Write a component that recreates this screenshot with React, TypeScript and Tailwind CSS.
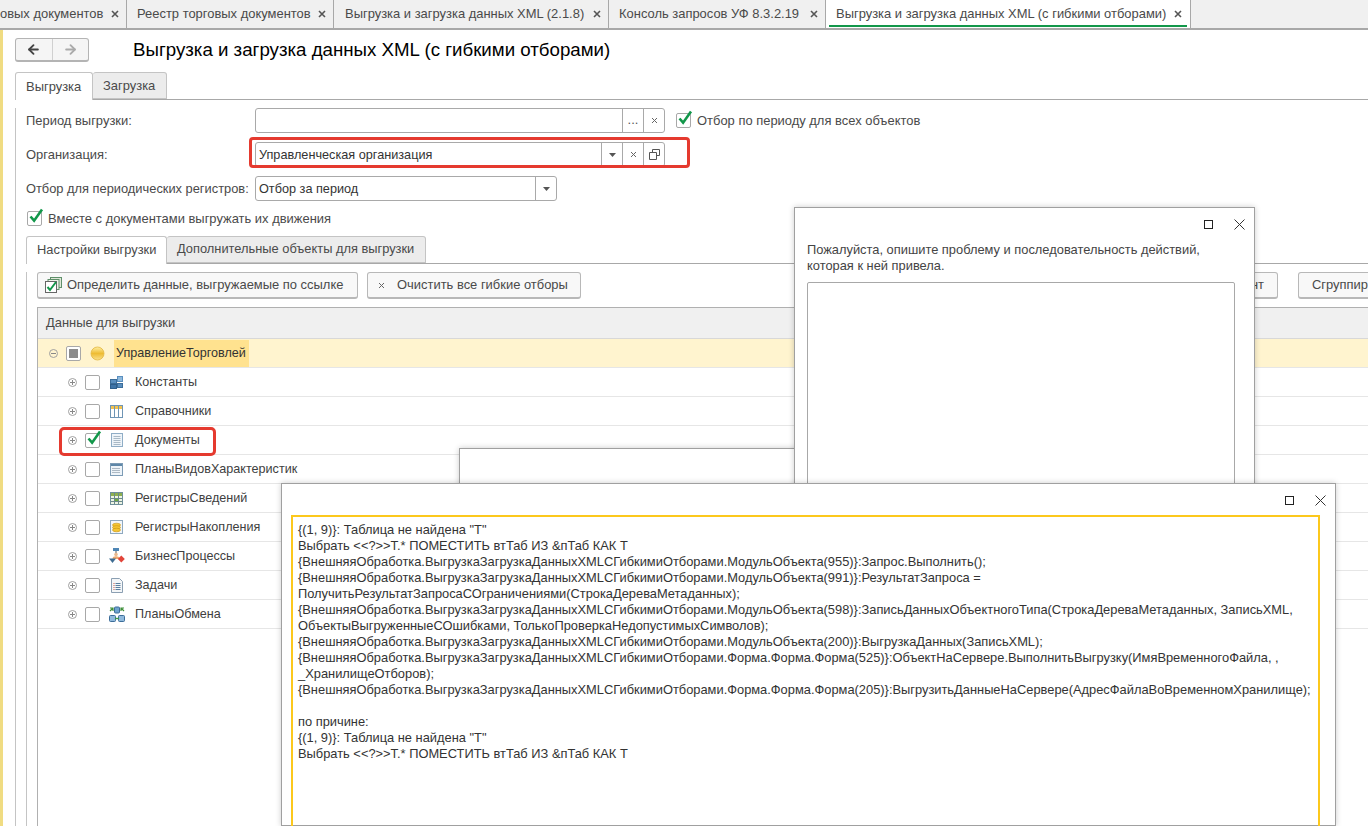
import React from "react";
import { ArrowLeft, ArrowRight } from "lucide-react";

const font = "font-['Liberation_Sans',Arial,sans-serif]";

const tabs = [
  { text: "овых документов", w: "w-[127px]", pl: "pl-0" },
  { text: "Реестр торговых документов", w: "w-[207px]", pl: "pl-[10px]" },
  { text: "Выгрузка и загрузка данных XML (2.1.8)", w: "w-[275px]", pl: "pl-[11px]" },
  { text: "Консоль запросов УФ 8.3.2.19", w: "w-[217px]", pl: "pl-[10px]" },
];

const TabClose = () => (
  <svg width="8" height="8" viewBox="0 0 8 8" className="shrink-0">
    <path d="M1 1l6 6M7 1L1 7" stroke="#555" strokeWidth="1.6" />
  </svg>
);

const SmallX = () => (
  <svg width="7" height="7" viewBox="0 0 7 7">
    <path d="M1 1l5 5M6 1L1 6" stroke="#666" strokeWidth="1" />
  </svg>
);

const Caret = () => (
  <svg width="7" height="4" viewBox="0 0 7 4">
    <path d="M0 0h7L3.5 4z" fill="#555" />
  </svg>
);

const OpenIcon = () => (
  <svg width="11" height="11" viewBox="0 0 11 11" fill="none" stroke="#555" strokeWidth="1">
    <path d="M3.5 3V.5h7v6H8" />
    <path d="M.5 3.5h7v7h-7z" />
  </svg>
);

const Check = ({ checked }: { checked?: boolean }) => (
  <span className="relative block w-[15px] h-[15px] border border-[#a8a8a8] rounded-[2px] bg-white shrink-0">
    {checked && (
      <svg width="17" height="16" viewBox="0 0 17 16" className="absolute left-0 top-[-4px]">
        <path d="M2.5 8.5l3.6 4.2L14 1.5" fill="none" stroke="#12974a" strokeWidth="2.6" />
      </svg>
    )}
  </span>
);

const Seg = ({ children }: { children?: React.ReactNode }) => (
  <span className="w-[21px] h-full border-l border-[#a9a9a9] flex items-center justify-center text-[#555]">
    {children}
  </span>
);

const Field = ({
  w,
  text,
  children,
}: {
  w: string;
  text?: string;
  children: React.ReactNode;
}) => (
  <div className={`${w} h-[25px] border border-[#a9a9a9] rounded-[3px] bg-white flex items-center`}>
    <span className="flex-1 pl-[3px] pt-px text-[12.7px] text-[#333]">{text}</span>
    {children}
  </div>
);

const Expander = ({ minus }: { minus?: boolean }) => (
  <svg width="11" height="11" viewBox="0 0 11 11" className="shrink-0">
    <circle cx="5.5" cy="5.5" r="4" fill="none" stroke="#a0a0a0" />
    <path d={minus ? "M3 5.5h5" : "M3 5.5h5M5.5 3v5"} stroke="#888" />
  </svg>
);

const ConstIcon = () => (
  <svg width="14" height="13" viewBox="0 0 14 13">
    <rect x="0.5" y="3.5" width="6" height="4" fill="#5a8fbf" stroke="#3c6d99" />
    <rect x="7.5" y="0.5" width="5" height="5" fill="#8fb9dc" stroke="#5a8fbf" />
    <rect x="0.5" y="8.5" width="6" height="4" fill="#3f75a8" stroke="#2f5f8c" />
    <rect x="7.5" y="7.5" width="5" height="4" fill="#5a8fbf" stroke="#3c6d99" />
  </svg>
);

const CatalogIcon = () => (
  <svg width="14" height="13" viewBox="0 0 14 13">
    <rect x="0.5" y="0.5" width="12" height="12" fill="#fff" stroke="#6f95b5" />
    <path d="M1 1h11v3H1z" fill="#f2c24f" />
    <path d="M4.5 1v11M8.5 1v11" stroke="#6f95b5" />
  </svg>
);

const DocIcon = () => (
  <svg width="14" height="14" viewBox="0 0 14 14">
    <rect x="1.5" y="0.5" width="11" height="13" fill="#eef4f9" stroke="#8fadc6" />
    <path d="M3.5 3.5h7M3.5 5.5h7M3.5 7.5h7M3.5 9.5h7M3.5 11.5h7" stroke="#a9b9c6" />
  </svg>
);

const CharIcon = () => (
  <svg width="14" height="13" viewBox="0 0 14 13">
    <rect x="0.5" y="0.5" width="12" height="12" fill="#eef4f9" stroke="#7d9cb6" />
    <path d="M1 1h11v2H1z" fill="#5e87a8" />
    <path d="M2.5 5.5h8M2.5 7.5h8M2.5 9.5h8" stroke="#6d7f8e" strokeDasharray="1 1" />
  </svg>
);

const InfoRegIcon = () => (
  <svg width="14" height="13" viewBox="0 0 14 13">
    <rect x="0.5" y="0.5" width="12" height="12" fill="#edf3e4" stroke="#6f8f9a" />
    <path d="M1 1h11v3H1z" fill="#8db04e" />
    <path d="M4.5 1v11M8.5 1v11M1 6.5h11M1 9.5h11" stroke="#6d8a8a" />
    <path d="M5 7h3v2H5z" fill="#6fae3f" />
  </svg>
);

const AccumRegIcon = () => (
  <svg width="14" height="14" viewBox="0 0 14 14">
    <rect x="0.5" y="0.5" width="12" height="13" fill="#f2f6fa" stroke="#8fa9c0" />
    <ellipse cx="6.5" cy="5" rx="4" ry="1.8" fill="#f4c534" stroke="#c9930f" strokeWidth="0.6" />
    <ellipse cx="6.5" cy="7.5" rx="4" ry="1.8" fill="#f4c534" stroke="#c9930f" strokeWidth="0.6" />
    <ellipse cx="6.5" cy="10" rx="4" ry="1.8" fill="#f4c534" stroke="#c9930f" strokeWidth="0.6" />
  </svg>
);

const BizIcon = () => (
  <svg width="16" height="16" viewBox="0 0 16 16">
    <path d="M4 0h6v3H4z" fill="#4f86b5" />
    <path d="M7 3v3" stroke="#555" />
    <circle cx="7" cy="6.500" r="1.800" fill="#eab98f" />
    <path d="M3.500 11c0-2.200 1.500-2.800 3.500-2.800s3.500.6 3.500 2.800z" fill="#eda86e" />
    <path d="M0 10.500h7L3.500 15z" fill="#3e6c92" />
    <path d="M12.300 7.500l3.500 3.500-3.500 3.500L8.800 11z" fill="#e2453a" />
  </svg>
);

const TaskIcon = () => (
  <svg width="14" height="15" viewBox="0 0 14 15">
    <path d="M1.500.5h8l3 3v11h-11z" fill="#f4f6f8" stroke="#8b9fb2" />
    <path d="M3.500 5.500h1M3.500 7.500h1M3.500 9.500h1M3.500 11.500h1" stroke="#d0553f" />
    <path d="M5.500 5.500h5M5.500 7.500h5M5.500 9.500h5M5.500 11.500h5" stroke="#5a7f9f" />
  </svg>
);

const ExchangeIcon = () => (
  <svg width="16" height="16" viewBox="0 0 16 16">
    <rect x="5.500" y="1" width="5" height="6" rx="1" fill="#6ea3cf" stroke="#3c6d99" />
    <rect x="0.500" y="9.500" width="6" height="6" rx="1" fill="#8fb9dc" stroke="#3c6d99" />
    <rect x="9.500" y="9.500" width="6" height="6" rx="1" fill="#8fb9dc" stroke="#3c6d99" />
    <path d="M1 5l3-3M1 2h3v3M15 5l-3-3M15 2h-3v3" stroke="#3f8f3a" strokeWidth="1.200" fill="none" />
    <path d="M6 12.500h4" stroke="#3f9a4a" strokeWidth="1.400" />
  </svg>
);

const RootIcon = () => (
  <svg width="15" height="15" viewBox="0 0 15 15">
    <defs>
      <linearGradient id="rootBall" x1="0" y1="0" x2="0" y2="1">
        <stop offset="0" stopColor="#ffeea0" />
        <stop offset="0.5" stopColor="#eebc33" />
        <stop offset="1" stopColor="#fae08a" />
      </linearGradient>
    </defs>
    <circle cx="7.500" cy="7.500" r="6.500" fill="url(#rootBall)" stroke="#e2b640" strokeWidth="0.8" />
  </svg>
);

const rows: { name: string; icon: React.ReactNode; checked?: boolean }[] = [
  { name: "Константы", icon: <ConstIcon /> },
  { name: "Справочники", icon: <CatalogIcon /> },
  { name: "Документы", icon: <DocIcon />, checked: true },
  { name: "ПланыВидовХарактеристик", icon: <CharIcon /> },
  { name: "РегистрыСведений", icon: <InfoRegIcon /> },
  { name: "РегистрыНакопления", icon: <AccumRegIcon /> },
  { name: "БизнесПроцессы", icon: <BizIcon /> },
  { name: "Задачи", icon: <TaskIcon /> },
  { name: "ПланыОбмена", icon: <ExchangeIcon /> },
];

const errorLines = [
  '{(1, 9)}: Таблица не найдена "Т"',
  "Выбрать <<?>>Т.* ПОМЕСТИТЬ втТаб ИЗ &пТаб КАК Т",
  "{ВнешняяОбработка.ВыгрузкаЗагрузкаДанныхXMLСГибкимиОтборами.МодульОбъекта(955)}:Запрос.Выполнить();",
  "{ВнешняяОбработка.ВыгрузкаЗагрузкаДанныхXMLСГибкимиОтборами.МодульОбъекта(991)}:РезультатЗапроса =",
  "ПолучитьРезультатЗапросаСОграничениями(СтрокаДереваМетаданных);",
  "{ВнешняяОбработка.ВыгрузкаЗагрузкаДанныхXMLСГибкимиОтборами.МодульОбъекта(598)}:ЗаписьДанныхОбъектногоТипа(СтрокаДереваМетаданных, ЗаписьXML,",
  "ОбъектыВыгруженныеСОшибками, ТолькоПроверкаНедопустимыхСимволов);",
  "{ВнешняяОбработка.ВыгрузкаЗагрузкаДанныхXMLСГибкимиОтборами.МодульОбъекта(200)}:ВыгрузкаДанных(ЗаписьXML);",
  "{ВнешняяОбработка.ВыгрузкаЗагрузкаДанныхXMLСГибкимиОтборами.Форма.Форма.Форма(525)}:ОбъектНаСервере.ВыполнитьВыгрузку(ИмяВременногоФайла, ,",
  "_ХранилищеОтборов);",
  "{ВнешняяОбработка.ВыгрузкаЗагрузкаДанныхXMLСГибкимиОтборами.Форма.Форма.Форма(205)}:ВыгрузитьДанныеНаСервере(АдресФайлаВоВременномХранилище);",
  "",
  "по причине:",
  '{(1, 9)}: Таблица не найдена "Т"',
  "Выбрать <<?>>Т.* ПОМЕСТИТЬ втТаб ИЗ &пТаб КАК Т",
];

const WindowButtons = () => (
  <div className="flex items-center justify-end gap-[21px] pr-[9px]">
    <span className="block w-[9px] h-[9px] border border-[#222]" />
    <svg width="11" height="11" viewBox="0 0 11 11">
      <path d="M.5.5l10 10M10.500.5l-10 10" stroke="#333" />
    </svg>
  </div>
);

export default function App() {
  return (
    <div className={`${font} relative w-[1368px] h-[826px] overflow-hidden bg-white text-[12.95px] leading-none text-[#4a4a4a]`}>
      <div className="h-[30px] flex bg-[#f0f0f0] border-b-2 border-[#a8a8a8]">
        {tabs.map((t) => (
          <div key={t.text} className={`${t.w} ${t.pl} h-[28px] flex items-center justify-between pr-[7px] border-r border-[#a8a8a8] shrink-0`}>
            <span className="whitespace-nowrap">{t.text}</span>
            <TabClose />
          </div>
        ))}
        <div className="relative w-[365px] h-[28px] pl-[10px] pr-[8px] flex items-center justify-between border-r border-[#a8a8a8] bg-white">
          <span className="whitespace-nowrap">Выгрузка и загрузка данных XML (с гибкими отборами)</span>
          <TabClose />
          <span className="absolute left-[3px] right-[3px] bottom-[1px] h-[2px] bg-[#12974a]" />
        </div>
      </div>

      <div className="flex h-[796px]">
        <div className="w-[3px] bg-[#f0dc82] shrink-0" />
        <div className="flex-1 pl-[12px] pt-[8px] min-w-0">
          <div className="flex items-center h-[24px]">
            <div className="w-[74px] h-[24px] flex border border-[#b4b4b4] border-b-2 rounded-[3px] bg-[#f5f5f5]">
              <span className="flex-1 flex items-center justify-center border-r border-[#d0d0d0]">
                <ArrowLeft size={15} strokeWidth={3} color="#444" />
              </span>
              <span className="flex-1 flex items-center justify-center">
                <ArrowRight size={15} strokeWidth={3} color="#aaa" />
              </span>
            </div>
            <h1 className="ml-[44px] mt-px text-[18.7px] font-normal text-black whitespace-nowrap">
              Выгрузка и загрузка данных XML (с гибкими отборами)
            </h1>
          </div>

          <div className="flex h-[28px] mt-[10px] border-b border-[#a8a8a8]">
            <div className="w-[78px] h-[28px] pt-px bg-white border border-[#c4c4c4] border-b-0 rounded-t-[3px] pl-[10px] flex items-center">Выгрузка</div>
            <div className="w-[74px] h-[27px] pt-px bg-[#ececec] border border-l-0 border-[#c4c4c4] rounded-t-[3px] pl-[10px] flex items-center">Загрузка</div>
          </div>

          <div className="border-l border-[#c4c4c4] pl-[10px] h-[727px]">
            <div className="flex items-center h-[25px] mt-[8px]">
              <span className="w-[229px] pt-px">Период выгрузки:</span>
              <Field w="w-[410px]">
                <Seg>...</Seg>
                <Seg><SmallX /></Seg>
              </Field>
              <span className="ml-[11px]"><Check checked /></span>
              <span className="ml-[6px] pt-px">Отбор по периоду для всех объектов</span>
            </div>
            <div className="flex items-center h-[25px] mt-[9px]">
              <span className="w-[229px] pt-px">Организация:</span>
              <Field w="w-[410px]" text="Управленческая организация">
                <Seg><Caret /></Seg>
                <Seg><SmallX /></Seg>
                <Seg><OpenIcon /></Seg>
              </Field>
            </div>
            <div className="flex items-center h-[25px] mt-[9px]">
              <span className="w-[229px] pt-px whitespace-nowrap text-[12.85px]">Отбор для периодических регистров:</span>
              <Field w="w-[302px]" text="Отбор за период">
                <Seg><Caret /></Seg>
              </Field>
            </div>
            <div className="flex items-center h-[15px] mt-[10px] pl-px">
              <Check checked />
              <span className="ml-[6px] pt-px">Вместе с документами выгружать их движения</span>
            </div>

            <div className="flex h-[28px] mt-[10px] border-b border-[#a8a8a8] text-[12.85px]">
              <div className="w-[141px] h-[28px] bg-white border border-[#c4c4c4] border-b-0 rounded-t-[3px] pl-[10px] flex items-center">Настройки выгрузки</div>
              <div className="w-[259px] h-[27px] bg-[#ececec] border border-l-0 border-[#c4c4c4] rounded-t-[3px] pl-[10px] flex items-center">Дополнительные объекты для выгрузки</div>
            </div>

            <div className="border-l border-[#c4c4c4] pl-[10px] h-[560px]">
              <div className="flex h-[27px] mt-[8px]">
                <div className="w-[321px] shrink-0 flex items-center pl-[7px] border border-b-2 border-[#b8b8b8] rounded-[3px] bg-[#f8f8f8]">
                  <svg width="18" height="16" viewBox="0 0 18 16" className="shrink-0">
                    <rect x="5.500" y="0.500" width="11" height="10" fill="#dfe8d8" stroke="#5f8f6a" />
                    <rect x="3" y="2.500" width="11" height="10" fill="#eef3ea" stroke="#5f8f6a" />
                    <rect x="0.500" y="4.500" width="11" height="11" fill="#fff" stroke="#666" />
                    <path d="M2.500 10l2.500 3 6-8" fill="none" stroke="#12974a" strokeWidth="2" />
                  </svg>
                  <span className="ml-[4px] pt-px whitespace-nowrap">Определить данные, выгружаемые по ссылке</span>
                </div>
                <div className="w-[214px] shrink-0 ml-[9px] flex items-center pl-[10px] border border-b-2 border-[#b8b8b8] rounded-[3px] bg-[#f8f8f8]">
                  <SmallX />
                  <span className="ml-[12px] pt-px whitespace-nowrap">Очистить все гибкие отборы</span>
                </div>
                <div className="w-[120px] shrink-0 ml-[577px] flex items-center justify-end pr-[13px] border border-b-2 border-[#b8b8b8] rounded-[3px] bg-[#f8f8f8]">
                  <span className="pt-px">нт</span>
                </div>
                <div className="w-[120px] shrink-0 ml-[20px] flex items-center pl-[13px] border border-b-2 border-[#b8b8b8] rounded-[3px] bg-[#f8f8f8]">
                  <span className="pt-px whitespace-nowrap">Сгруппировать</span>
                </div>
              </div>

              <div className="mt-[8px] border-l border-t border-[#b0b0b0] h-[520px]">
                <div className="h-[31px] bg-[#f0f0f0] border-b border-[#d8d8d8] pl-[8px] flex items-center">Данные для выгрузки</div>
                <div className="h-[29px] bg-[#fff4cf] border-b border-[#e6e6e6] flex items-center pl-[10px]">
                  <Expander minus />
                  <span className="ml-[7px] w-[15px] h-[15px] border border-[#a8a8a8] rounded-[2px] bg-white flex items-center justify-center shrink-0">
                    <span className="block w-[9px] h-[9px] bg-[#8c8c8c]" />
                  </span>
                  <span className="ml-[9px]"><RootIcon /></span>
                  <span className="ml-[9px] h-[27px] w-[135px] pl-[2px] pt-px bg-[#ffe28f] flex items-center text-[12.6px] text-[#333]">УправлениеТорговлей</span>
                </div>
                {rows.map((r) => (
                  <div key={r.name} className="h-[29px] border-b border-[#e6e6e6] flex items-center pl-[29px]">
                    <Expander />
                    <span className="ml-[7px]"><Check checked={r.checked} /></span>
                    <span className="ml-[9px] w-[16px] flex justify-center">{r.icon}</span>
                    <span className="ml-[10px] pt-px whitespace-nowrap text-[12.6px] text-[#404040]">{r.name}</span>
                  </div>
                ))}
              </div>
            </div>
          </div>
        </div>
      </div>

      {/* red marks drawn over the form */}
      <div className="absolute left-[249px] top-[137px] w-[441px] h-[31px] border-[3px] border-[#e53a2f] rounded-[4px]" />
      <div className="absolute left-[59px] top-[427px] w-[157px] h-[29px] border-[3px] border-[#e53a2f] rounded-[5px]" />

      {/* error windows, back to front */}
      <div className="absolute left-[459px] top-[448px] w-[400px] h-[378px] bg-white border border-[#a0a0a0] shadow-[0_0_6px_rgba(0,0,0,0.2)]" />

      <div className="absolute left-[794px] top-[207px] w-[461px] h-[619px] bg-white border border-[#a0a0a0] shadow-[0_0_6px_rgba(0,0,0,0.2)] pl-[12px] pt-[11px]">
        <WindowButtons />
        <p className="mt-[12px] text-[12.86px] leading-[16px] text-[#444]">
          Пожалуйста, опишите проблему и последовательность действий,
          <br />
          которая к ней привела.
        </p>
        <div className="mt-[8px] w-[428px] h-[300px] border border-[#a8a8a8] rounded-[2px]" />
      </div>

      <div className="absolute left-[281px] top-[483px] w-[1055px] h-[343px] bg-white border border-[#a0a0a0] shadow-[0_0_6px_rgba(0,0,0,0.2)] pl-[9px] pt-[11px]">
        <WindowButtons />
        <div className="mt-[9px] w-[1029px] h-[330px] border-2 border-[#fcc81c] pl-[5px] pt-[5px] text-[12.86px] text-[#333] leading-[16px]">
          {errorLines.map((line, i) => (
            <div key={i} className="h-[16px] whitespace-nowrap">{line}</div>
          ))}
        </div>
      </div>
    </div>
  );
}
